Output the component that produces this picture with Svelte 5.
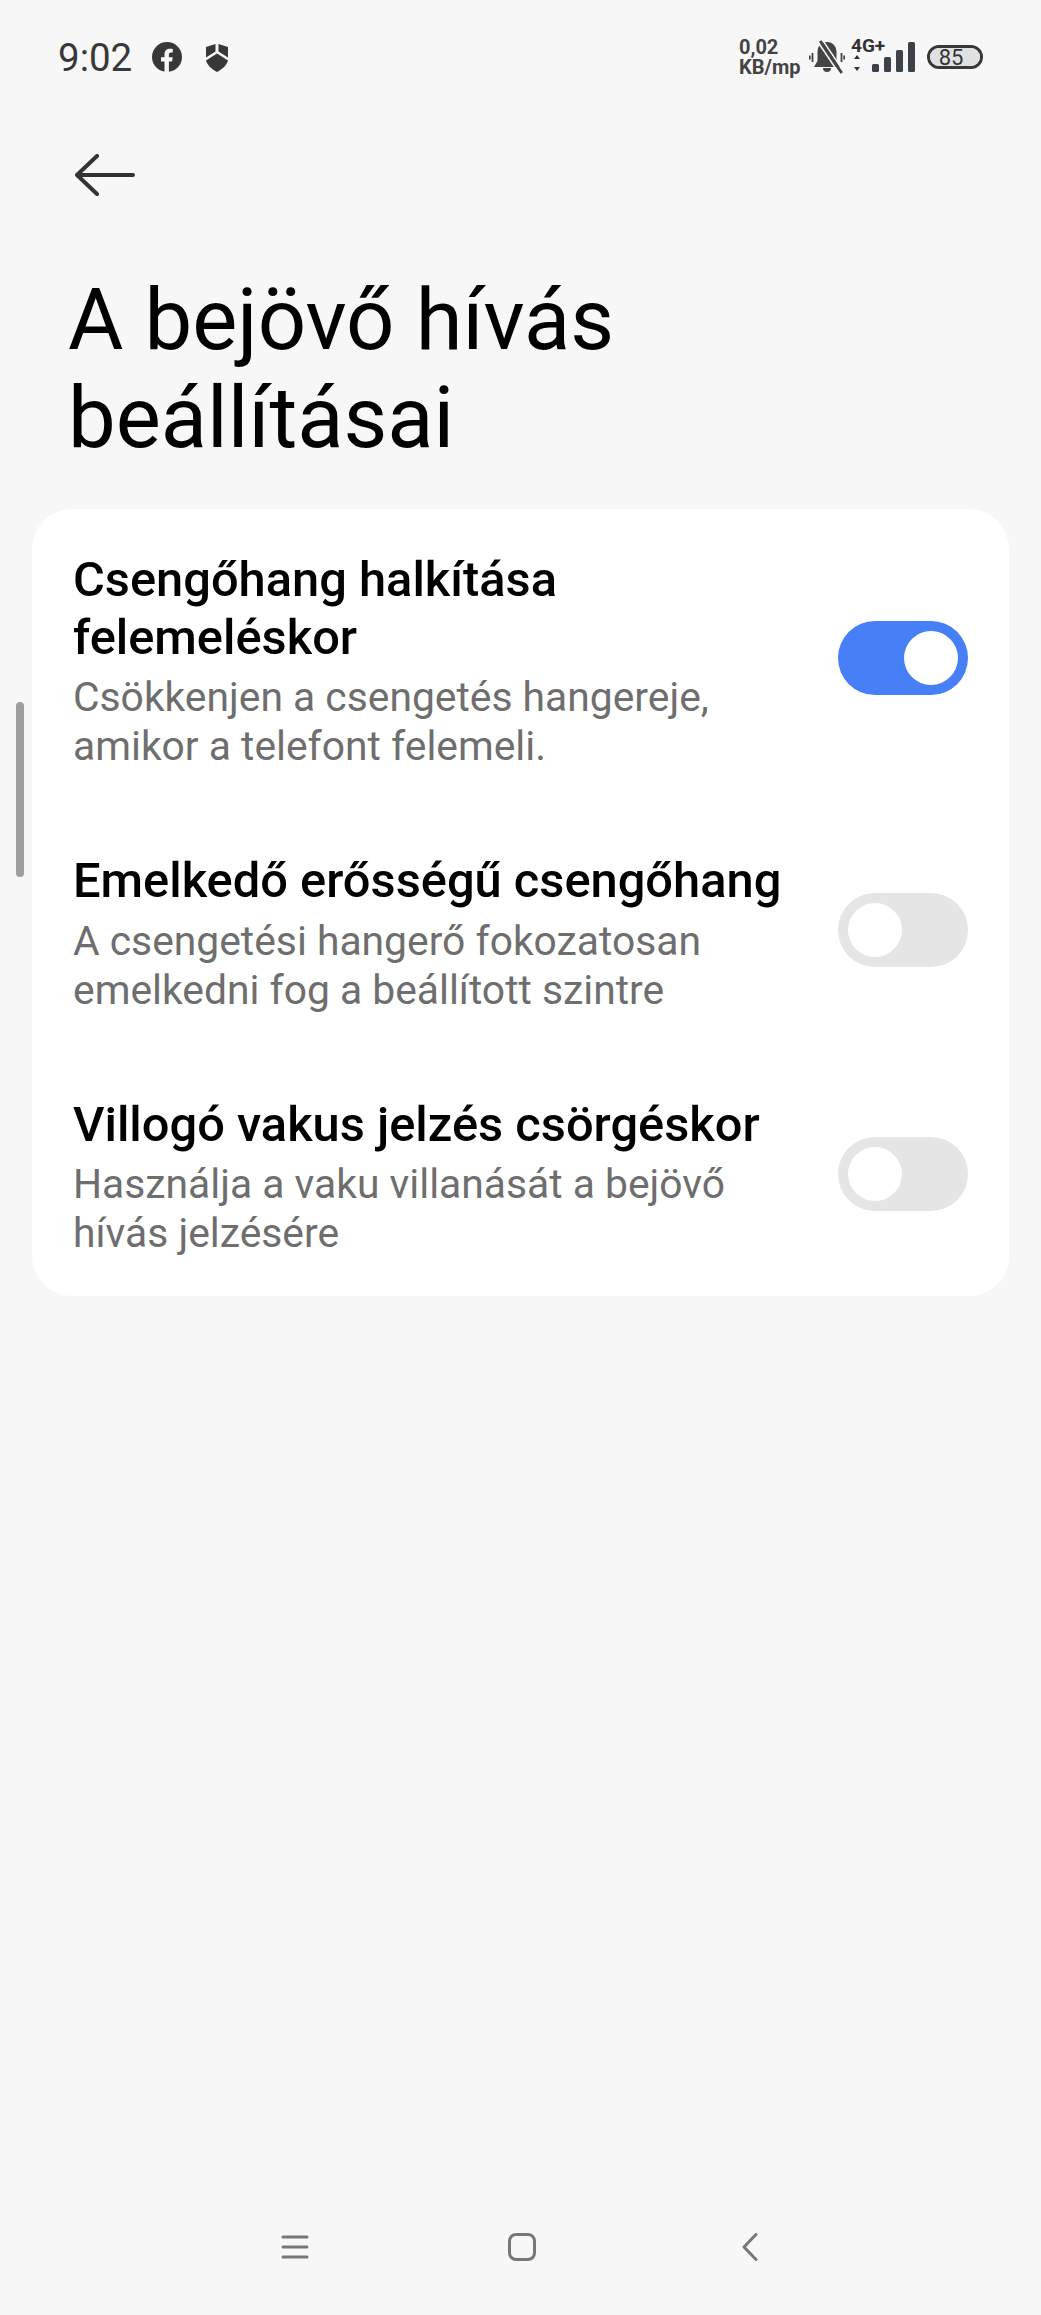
<script>
  const rows = [
    {
      title: 'Csengőhang halkítása felemeléskor',
      desc: 'Csökkenjen a csengetés hangereje, amikor a telefont felemeli.',
      on: true
    },
    {
      title: 'Emelkedő erősségű csengőhang',
      desc: 'A csengetési hangerő fokozatosan emelkedni fog a beállított szintre',
      on: false
    },
    {
      title: 'Villogó vakus jelzés csörgéskor',
      desc: 'Használja a vaku villanását a bejövő hívás jelzésére',
      on: false
    }
  ];

  const bars = [8, 15, 22, 30];
</script>

<div class="page">
  <div class="scrollbar"></div>

  <header class="status">
    <div class="status-left">
      <span class="time">9:02</span>
      <svg class="fb" viewBox="0 0 30 30" width="30" height="30">
        <circle cx="15" cy="15" r="15" fill="#383838" />
        <path d="M12.5 30V19.5H9v-4.2h3.5v-3c0-3.6 2.1-5.6 5.4-5.6 1.5 0 2.9.2 2.9.2v3.6h-1.7c-1.7 0-2.2 1-2.2 2.1v2.7h3.8l-.6 4.2h-3.2V30z" fill="#f7f7f7" />
      </svg>
      <svg class="shield" viewBox="0 0 24 29" width="24" height="29">
        <path d="M1 4 10.5 1v7.5L1 14.5z" fill="#383838" />
        <path d="M23 4 13.5 1v7.5l9.5 6z" fill="#383838" />
        <path d="M12 10.5 23 17.5C21.5 22.5 17 26.500 12 29 7 26.500 2.500 22.500 1 17.500z" fill="#383838" />
      </svg>
    </div>
    <div class="status-right">
      <div class="speed"><span>0,02</span><span>KB/mp</span></div>
      <svg class="bell" viewBox="0 0 36 34" width="36" height="34">
        <path d="M18 2c-6 0-9.500 4.500-9.500 10v9L5 27h26l-3.500-6v-9C27.500 6.500 24 2 18 2z" fill="#444" />
        <path d="M14 28h8a4 4 0 0 1-8 0z" fill="#444" />
        <path d="M3.500 13v9M.8 15.500v4M32.500 13v9M35.200 15.500v4" stroke="#444" stroke-width="1.800" fill="none" />
        <path d="M13.500 0 35 32" stroke="#f7f7f7" stroke-width="1.500" fill="none" />
        <path d="M11.200 1 32.700 33" stroke="#444" stroke-width="3" fill="none" />
        <path d="M8.900 2 30.400 34" stroke="#f7f7f7" stroke-width="1.500" fill="none" />
      </svg>
      <div class="net">
        <span class="net-label">4G+</span>
        <svg class="updown" viewBox="0 0 8 16" width="8" height="16">
          <path d="M4 0l3 4H1zM4 16l3-4H1z" fill="#333" />
        </svg>
      </div>
      <div class="bars">
        {#each bars as h}
          <span class="bar" style="height:{h}px"></span>
        {/each}
      </div>
      <div class="battery">
        <span class="battery-fill"></span>
        <span class="battery-num">85</span>
      </div>
    </div>
  </header>

  <button class="back" aria-label="Vissza">
    <svg viewBox="0 0 60 42" width="60" height="42">
      <path d="M2 21H58M22 2 2 21 22 40" fill="none" stroke="#333" stroke-width="4" stroke-linecap="round" stroke-linejoin="round" />
    </svg>
  </button>

  <h1>A bejövő hívás beállításai</h1>

  <section class="card">
    {#each rows as row}
      <div class="row">
        <div class="text">
          <div class="title">{row.title}</div>
          <div class="desc">{row.desc}</div>
        </div>
        <span class="toggle" class:on={row.on}><span class="knob"></span></span>
      </div>
    {/each}
  </section>

  <nav class="navbar">
    <svg viewBox="0 0 28 24" width="28" height="24">
      <path d="M2 2H26M2 12H26M2 22H26" stroke="#777" stroke-width="3" stroke-linecap="round" fill="none" />
    </svg>
    <svg viewBox="0 0 28 28" width="28" height="28">
      <rect x="1.500" y="1.500" width="25" height="25" rx="6.500" stroke="#777" stroke-width="3" fill="none" />
    </svg>
    <svg class="nav-back" viewBox="0 0 16 28" width="16" height="28">
      <path d="M14 1.500 2 14 14 26.500" stroke="#777" stroke-width="3" stroke-linecap="round" stroke-linejoin="round" fill="none" />
    </svg>
  </nav>
</div>

<style>
  :global(body) {
    margin: 0;
    background: #f7f7f7;
  }

  .page {
    position: relative;
    height: 2315px;
    box-sizing: border-box;
    display: flex;
    flex-direction: column;
    background: #f7f7f7;
    font-family: Roboto, sans-serif;
    overflow: hidden;
  }

  .scrollbar {
    position: absolute;
    left: 16px;
    top: 702px;
    width: 8px;
    height: 175px;
    border-radius: 4px;
    background: #9e9e9e;
  }

  .status {
    height: 34px;
    margin-top: 40px;
    padding: 0 58px;
    display: flex;
    align-items: center;
    justify-content: space-between;
  }

  .status-left {
    display: flex;
    align-items: center;
  }

  .time {
    font-size: 38.5px;
    color: #383838;
    width: 94px;
  }

  .fb {
    margin-right: 23px;
  }

  .status-right {
    display: flex;
    align-items: center;
  }

  .speed {
    display: flex;
    flex-direction: column;
    font-size: 20px;
    line-height: 20px;
    font-weight: 700;
    color: #444;
    width: 70px;
  }

  .net {
    width: 24px;
    margin-left: 6px;
    display: flex;
    flex-direction: column;
    align-self: flex-start;
    position: relative;
  }

  .net-label {
    font-size: 19px;
    line-height: 18px;
    font-weight: 700;
    color: #333;
    white-space: nowrap;
  }

  .updown {
    margin-left: 2px;
  }

  .bars {
    display: flex;
    align-items: flex-end;
    gap: 5px;
    height: 30px;
    margin-left: -3px;
  }

  .bar {
    width: 7px;
    border-radius: 1.500px;
    background: #3d4148;
  }

  .battery {
    position: relative;
    width: 56px;
    height: 24px;
    margin-left: 12px;
    box-sizing: border-box;
    border: 3px solid #383838;
    border-radius: 12px;
    overflow: hidden;
    display: flex;
    align-items: center;
    justify-content: center;
  }

  .battery-fill {
    position: absolute;
    inset: 0;
    background: #e0e0e0;
  }

  .battery-num {
    position: relative;
    font-size: 22px;
    color: #333;
    margin-right: 8px;
  }

  .back {
    margin: 80px 0 0 75px;
    padding: 0;
    width: 60px;
    height: 42px;
    border: none;
    background: none;
    display: block;
  }

  .back svg {
    display: block;
  }

  h1 {
    margin: 75px 0 0 68px;
    width: 700px;
    font-size: 85px;
    line-height: 98px;
    font-weight: 400;
    color: #000;
  }

  .card {
    margin: 42px 32px 0;
    padding: 42px 41px 38px 41px;
    background: #fff;
    border-radius: 40px;
    display: flex;
    flex-direction: column;
    gap: 81px;
  }

  .row {
    display: flex;
    align-items: center;
    justify-content: space-between;
    gap: 42px;
  }

  .text {
    flex: 1;
    min-width: 0;
  }

  .title {
    font-size: 48.8px;
    line-height: 57.5px;
    font-weight: 500;
    color: #000;
  }

  .desc {
    font-size: 40.8px;
    line-height: 49px;
    color: #6e6e6e;
    margin-top: 7px;
  }

  .toggle {
    flex: none;
    width: 130px;
    height: 74px;
    margin-bottom: 6px;
    border-radius: 37px;
    box-sizing: border-box;
    padding: 10px;
    background: #e5e5e5;
    display: flex;
  }

  .toggle.on {
    background: #477ff6;
    justify-content: flex-end;
  }

  .knob {
    width: 54px;
    height: 54px;
    border-radius: 50%;
    background: #fff;
  }

  .navbar {
    margin-top: auto;
    margin-bottom: 54px;
    padding-left: 281px;
    display: flex;
    align-items: center;
    gap: 199px;
  }

  .navbar svg {
    display: block;
  }

  .nav-back {
    margin-left: 7px;
  }
</style>
